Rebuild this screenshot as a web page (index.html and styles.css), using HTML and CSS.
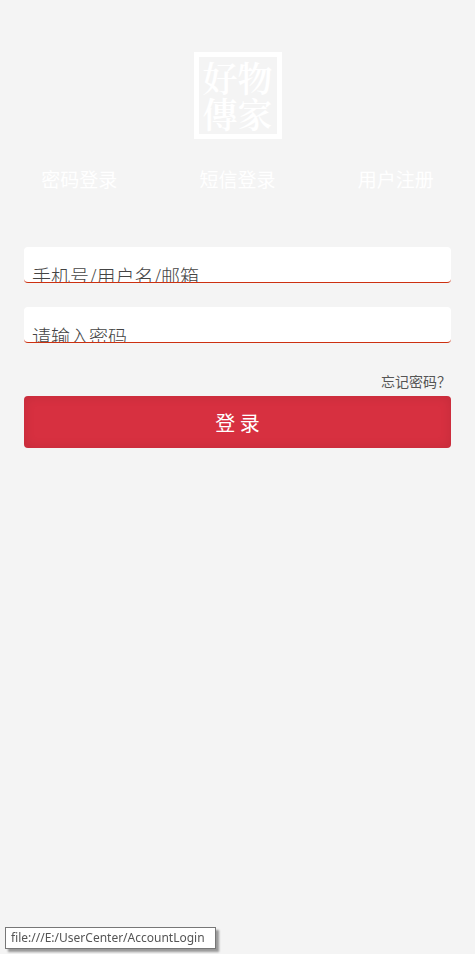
FILE: index.html
```html
<!DOCTYPE html>
<html lang="zh-CN">
<head>
<meta charset="utf-8">
<meta name="viewport" content="width=device-width, initial-scale=1">
<title>登录</title>
<link rel="stylesheet" href="styles.css">
</head>
<body>
<main class="page">
  <h1 class="logo"><span class="logo-row">好物</span><span class="logo-row">傳家</span></h1>
  <nav class="tabs">
    <a class="tab" href="#">密码登录</a>
    <a class="tab" href="#">短信登录</a>
    <a class="tab" href="#">用户注册</a>
  </nav>
  <form class="form">
    <label class="field"><input class="field-input" type="text" aria-label="手机号/用户名/邮箱" placeholder="手机号/用户名/邮箱"></label>
    <label class="field"><input class="field-input" type="password" aria-label="请输入密码" placeholder="请输入密码"></label>
    <a class="forgot" href="#">忘记密码？</a>
    <button class="submit" type="button">登 录</button>
  </form>
</main>
<div class="status">file:///E:/UserCenter/AccountLogin</div>
</body>
</html>
```
FILE: styles.css
```css
* { box-sizing: border-box; }

body {
  margin: 0;
  min-height: 100vh;
  background: #f4f4f4;
  color: #555;
  font-family: "Noto Sans CJK SC", sans-serif;
}

a { color: inherit; text-decoration: none; }

.page { padding-top: 52px; }

.logo {
  width: 88px;
  height: 87px;
  margin: 0 auto;
  padding-top: 2px;
  border: 5px solid #fff;
  color: #fff;
  font-family: "Noto Serif CJK TC", "Noto Sans CJK TC", serif;
  font-size: 35px;
  font-weight: 600;
  line-height: 36px;
  text-align: center;
}

.logo-row { display: block; }

.tabs {
  display: grid;
  grid-template-columns: repeat(3, 1fr);
  margin-top: 24px;
}

.tab {
  color: #fff;
  font-size: 19px;
  line-height: 32px;
  text-align: center;
}

.form {
  display: flex;
  flex-direction: column;
  margin: 52px 24px 0;
}

.field {
  display: block;
  height: 36px;
  margin-bottom: 24px;
  border-bottom: 1px solid #cc3010;
  border-radius: 4px;
  background: #fff;
  overflow: hidden;
}

/* Taller than its box, so the text sits low and is cut by the bottom rule. */
.field-input {
  display: block;
  width: 100%;
  height: 56px;
  padding: 0 8px;
  border: 0;
  outline: 0;
  background: transparent;
  color: #555;
  font-family: inherit;
  font-size: 19px;
  font-weight: 300;
}

.field-input::placeholder {
  color: #444;
  opacity: 1;
}

.forgot {
  align-self: flex-end;
  font-size: 14px;
  line-height: 29px;
}

.submit {
  height: 52px;
  padding: 0;
  border: 0;
  border-radius: 4px;
  background: #d73040;
  box-shadow: inset 0 0 12px rgba(0, 0, 0, 0.1);
  color: #fff;
  font-family: inherit;
  font-size: 20px;
  font-weight: 400;
}

.status {
  position: fixed;
  left: 5px;
  bottom: 5px;
  padding: 0 10px 0 5px;
  border: 1px solid #777;
  background: #fff;
  box-shadow: 3px 3px 2px #999;
  font-family: "Noto Sans", sans-serif;
  font-size: 12px;
  line-height: 20px;
}
```
